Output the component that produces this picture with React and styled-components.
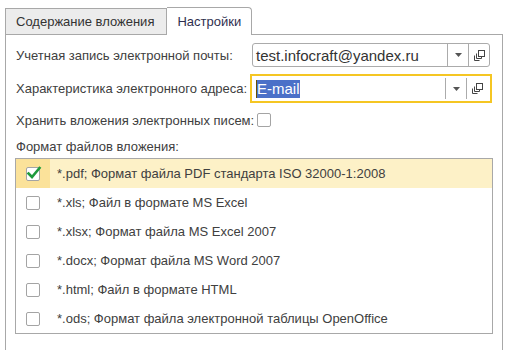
import React from 'react';
import styled, { createGlobalStyle } from 'styled-components';

const GlobalStyle = createGlobalStyle`
  body {
    margin: 0;
    background: #fff;
    font-family: "Liberation Sans", Arial, sans-serif;
    font-size: 13px;
    color: #404040;
  }
`;

const formats = [
  { text: '*.pdf; Формат файла PDF стандарта ISO 32000-1:2008', checked: true },
  { text: '*.xls; Файл в формате MS Excel' },
  { text: '*.xlsx; Формат файла MS Excel 2007' },
  { text: '*.docx; Формат файла MS Word 2007' },
  { text: '*.html; Файл в формате HTML' },
  { text: '*.ods; Формат файла электронной таблицы OpenOffice' },
];

function DropArrow() {
  return (
    <svg width="7" height="4" viewBox="0 0 7 4">
      <path d="M0 0h7L3.5 4z" fill="#555" />
    </svg>
  );
}

function OpenIcon() {
  return (
    <svg width="11" height="11" viewBox="0 0 11 11" fill="none" stroke="#444" strokeWidth="1">
      <rect x="4.5" y="0.5" width="6" height="6" />
      <path d="M2.5 3.5v5h5v-2" />
      <path d="M0.5 5.5v5h5" />
    </svg>
  );
}

function CheckMark() {
  return (
    <svg width="16" height="14" viewBox="0 0 16 14">
      <path d="M2.5 7.5l3.5 3.5l7.5-9" fill="none" stroke="#1e9a3c" strokeWidth="2.6" strokeLinecap="square" />
    </svg>
  );
}

function Field({ value, focused }) {
  return (
    <InputBox focused={focused}>
      <InputText>{focused ? <Selected>{value}</Selected> : value}</InputText>
      <InputButton><DropArrow /></InputButton>
      <InputButton><OpenIcon /></InputButton>
    </InputBox>
  );
}

export default function App() {
  return (
    <>
      <GlobalStyle />
      <Page>
        <Tabs>
          <Tab>Содержание вложения</Tab>
          <Tab active>Настройки</Tab>
        </Tabs>
        <Panel>
          <Row height={24}>
            <Label>Учетная запись электронной почты:</Label>
            <Field value="test.infocraft@yandex.ru" />
          </Row>
          <Row height={29} top={7}>
            <Label>Характеристика электронного адреса:</Label>
            <Field value="E-mail" focused />
          </Row>
          <Row height={16} top={9}>
            <Label auto>Хранить вложения электронных писем:</Label>
            <Box />
          </Row>
          <Row height={18} top={9}>
            <Label auto>Формат файлов вложения:</Label>
          </Row>
          <List>
            {formats.map((f, i) => (
              <Item key={i} selected={f.checked}>
                <BoxCell selected={f.checked}>
                  <Box>{f.checked && <CheckWrap><CheckMark /></CheckWrap>}</Box>
                </BoxCell>
                <ItemText>{f.text}</ItemText>
              </Item>
            ))}
          </List>
        </Panel>
      </Page>
    </>
  );
}

const Page = styled.div`
  padding: 7px 0 0 5px;
  width: 498px;
`;

const Tabs = styled.div`
  display: flex;
  align-items: flex-end;
  height: 28px;
  margin-bottom: -1px;
  position: relative;
  z-index: 1;
`;

const Tab = styled.div`
  box-sizing: border-box;
  height: ${p => (p.active ? 28 : 27)}px;
  padding: ${p => (p.active ? '0 10px 0 10px' : '0 12px 0 10px')};
  display: flex;
  align-items: center;
  font-size: 13px;
  color: ${p => (p.active ? '#2f2f4f' : '#333')};
  background: ${p => (p.active ? '#fff' : '#ececec')};
  border: 1px solid #a8a8a8;
  border-bottom: ${p => (p.active ? 'none' : '1px solid #a8a8a8')};
  border-left: ${p => (p.active ? 'none' : '1px solid #a8a8a8')};
  border-radius: ${p => (p.active ? '0 4px 0 0' : '0')};
`;

const Panel = styled.div`
  border: 1px solid #a8a8a8;
  border-bottom: none;
  padding: 8px 10px 30px 9px;
  min-height: 280px;
`;

const Row = styled.div`
  display: flex;
  align-items: center;
  height: ${p => p.height}px;
  margin-top: ${p => p.top || 0}px;
`;

const Label = styled.div`
  box-sizing: border-box;
  padding-left: 1px;
  width: ${p => (p.auto ? 'auto' : '237px')};
  margin-right: ${p => (p.auto ? '3px' : '0')};
  white-space: nowrap;
`;

const InputBox = styled.div`
  box-sizing: border-box;
  display: flex;
  align-items: stretch;
  width: ${p => (p.focused ? 243 : 238)}px;
  height: ${p => (p.focused ? 29 : 24)}px;
  margin-left: ${p => (p.focused ? -1 : 0)}px;
  padding: ${p => (p.focused ? '2px 3px 2px 1px' : '0')};
  border: ${p => (p.focused ? '2px solid #f5c623' : '1px solid #ababab')};
  border-radius: ${p => (p.focused ? 0 : 3)}px;
`;

const InputText = styled.div`
  flex: 1;
  display: flex;
  align-items: center;
  padding-left: 3px;
  font-size: 15px;
  color: #333;
  overflow: hidden;
  white-space: nowrap;
`;

const Selected = styled.span`
  background: #4b70c8;
  color: #fff;
  border-left: 1px solid #6b5000;
  line-height: 18px;
`;

const InputButton = styled.div`
  width: 20px;
  display: flex;
  align-items: center;
  justify-content: center;
  border-left: 1px solid #ababab;
`;

const List = styled.div`
  margin-top: 3px;
  border: 1px solid #a8a8a8;
  width: 476px;
`;

const Item = styled.div`
  display: flex;
  align-items: center;
  height: 29px;
  background: ${p => (p.selected ? '#fdf1c7' : '#fff')};
`;

const BoxCell = styled.div`
  align-self: stretch;
  width: 34px;
  display: flex;
  align-items: center;
  justify-content: center;
  background: ${p => (p.selected ? '#fbe29a' : 'transparent')};
`;

const Box = styled.div`
  position: relative;
  box-sizing: border-box;
  width: 14px;
  height: 14px;
  border: 1px solid #a4a4a4;
  border-radius: 2px;
  background: #fff;
`;

const CheckWrap = styled.div`
  position: absolute;
  left: -1px;
  top: -2px;
`;

const ItemText = styled.div`
  margin-left: 7px;
  font-size: 13px;
  color: #404040;
  white-space: nowrap;
`;
